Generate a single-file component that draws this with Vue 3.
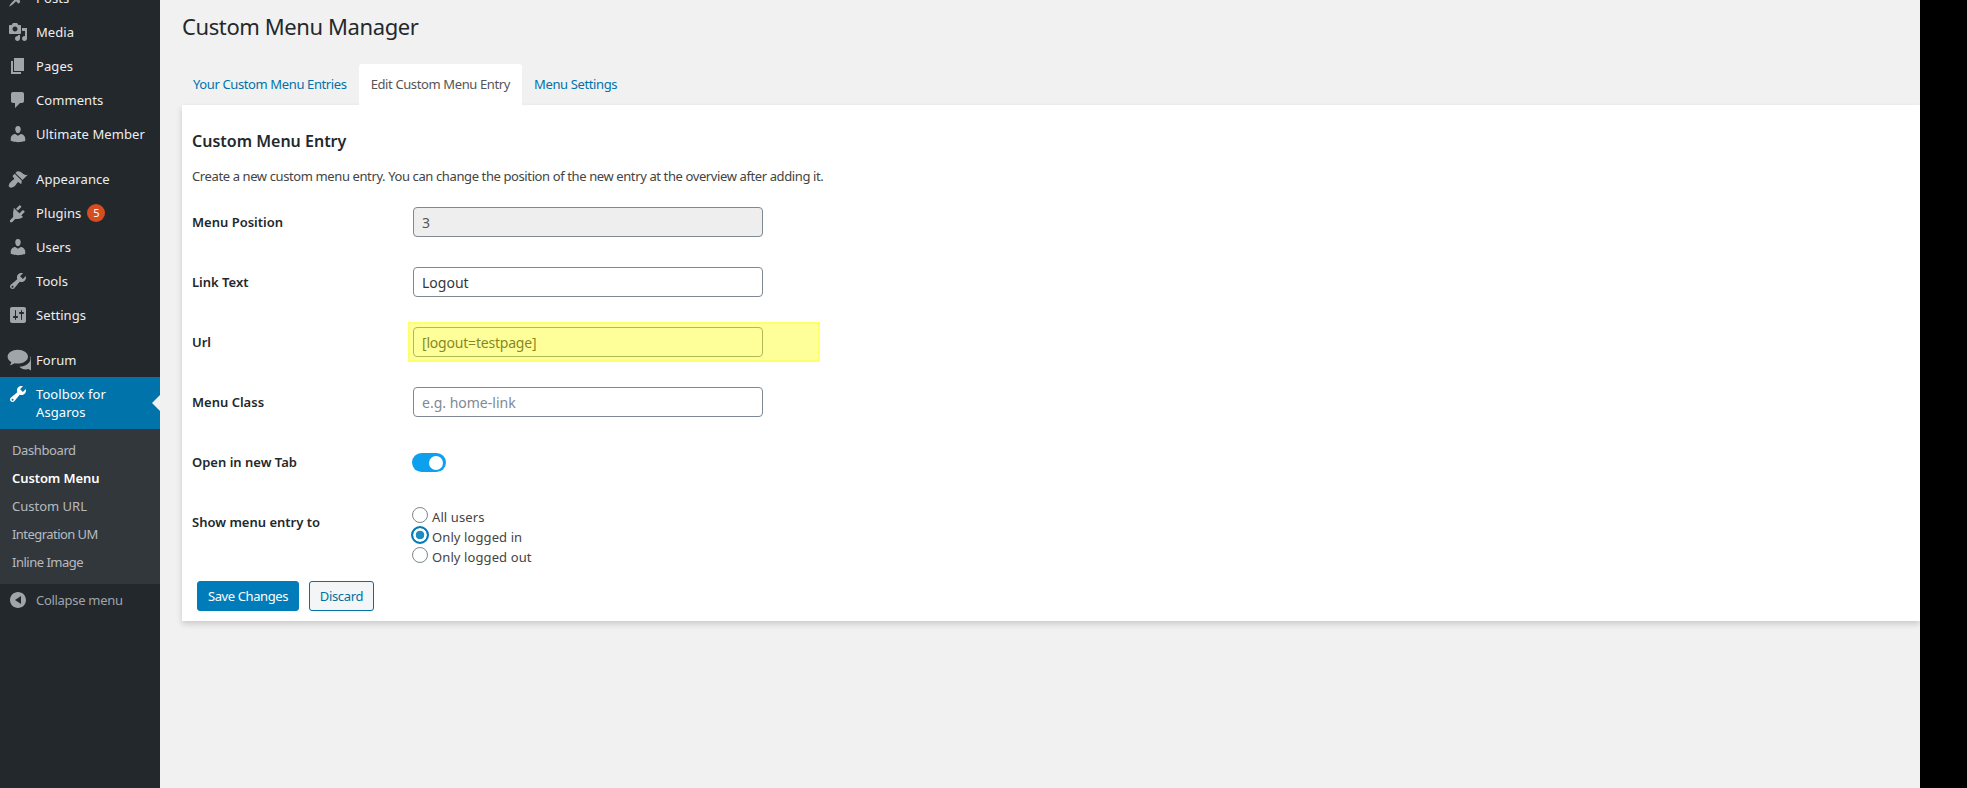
<script setup>
const icons = {
  posts: 'M10.44 3.02l1.82-1.82 6.36 6.35-1.83 1.82c-1.05-.68-2.48-.57-3.41.36l-.75.75c-.92.93-1.04 2.35-.35 3.41l-1.83 1.82-2.41-2.41-2.8 2.79c-.42.42-3.38 2.71-3.8 2.29s1.86-3.39 2.28-3.81l2.79-2.79L4.1 9.36l1.83-1.82c1.05.69 2.48.57 3.4-.36l.75-.75c.93-.92 1.05-2.35.36-3.41z',
  media: 'M13 11V4c0-.55-.45-1-1-1h-1.67L9 1H5L3.67 3H2c-.55 0-1 .45-1 1v7c0 .55.45 1 1 1h10c.55 0 1-.45 1-1zM7 4.5c1.38 0 2.5 1.12 2.5 2.5S8.38 9.5 7 9.5 4.5 8.38 4.5 7 5.62 4.5 7 4.5zM14 6h5v10.5c0 1.38-1.12 2.5-2.5 2.5S14 17.88 14 16.5s1.12-2.5 2.5-2.5c.17 0 .34.02.5.05V9h-3V6zm-4 8.05V13h2v3.5c0 1.38-1.12 2.5-2.5 2.5S7 17.88 7 16.5 8.12 14 9.5 14c.17 0 .34.02.5.05z',
  pages: 'M6 15V2h10v13H6zm-1 1h8v2H3V5h2v11z',
  comments: 'M5 2h9c1.1 0 2 .9 2 2v7c0 1.1-.9 2-2 2h-2l-5 5v-5H5c-1.1 0-2-.9-2-2V4c0-1.1.9-2 2-2z',
  user: 'M10 9.25c-2.27 0-2.73-3.44-2.73-3.44C7 4.02 7.82 2 9.97 2c2.16 0 2.98 2.02 2.71 3.81 0 0-.41 3.44-2.68 3.44zm0 2.57L12.72 10c2.39 0 4.52 2.33 4.52 4.53v2.49s-3.65 1.13-7.24 1.13c-3.65 0-7.24-1.13-7.24-1.13v-2.49c0-2.25 1.94-4.48 4.47-4.48z',
  appearance: 'M14.48 11.06L7.41 3.99l1.5-1.5c.5-.56 2.3-.47 3.51.32 1.21.8 1.43 1.28 2.91 2.1 1.18.64 2.45 1.26 4.45.85zm-.71.71L6.7 4.7 4.93 6.47c-.39.39-.39 1.02 0 1.41l1.06 1.06c.39.39.39 1.03 0 1.42-.6.6-1.43 1.11-2.21 1.69-.35.26-.7.53-1.01.84C1.43 13.73 0 16.66 1.39 18.06c1.4 1.39 4.31-.05 5.65-1.39.31-.31.58-.66.84-1.01.59-.77 1.09-1.61 1.7-2.21.39-.39 1.02-.39 1.41 0l1.06 1.06c.39.39 1.02.39 1.41 0z',
  plugins: 'M13.11 4.36L9.87 7.6 8 5.73l3.24-3.24c.35-.34 1.05-.2 1.56.32.52.51.66 1.21.31 1.55zm-8 1.77l.91-1.12 9.01 9.01-1.19.84c-.71.71-2.58 1.18-3.82 1.18H7.21l-3.15 3.15H1.99v-2.06l3.16-3.17V9.93c0-1.24.35-3.11 1.05-3.81zM16.4 9.2l-3.24 3.24-1.87-1.87 3.24-3.24c.34-.35 1.04-.21 1.55.31.52.51.67 1.21.32 1.56z',
  tools: 'M16.68 9.77c-1.34 1.34-3.3 1.67-4.95.99l-5.41 6.52c-.99.99-2.59.99-3.57 0-.99-.98-.99-2.58 0-3.57l6.52-5.42c-.68-1.65-.35-3.61.99-4.95 1.28-1.28 3.12-1.62 4.72-1.06l-2.89 2.89 2.82 2.82 2.86-2.87c.53 1.58.18 3.4-1.09 4.67zM3.81 16.56c.4.4 1.04.4 1.44 0 .4-.4.4-1.04 0-1.44-.4-.4-1.04-.4-1.44 0-.4.4-.4 1.04 0 1.44z',
  settings: 'M18 16V4c0-1.1-.9-2-2-2H4c-1.1 0-2 .9-2 2v12c0 1.1.9 2 2 2h12c1.1 0 2-.9 2-2zM8 11h1c.55 0 1 .45 1 1s-.45 1-1 1H8v1.5c0 .28-.22.5-.5.5s-.5-.22-.5-.5V13H6c-.55 0-1-.45-1-1s.45-1 1-1h1V5.5c0-.28.22-.5.5-.5s.5.22.5.5V11zm5-2h-1c-.55 0-1-.45-1-1s.45-1 1-1h1V5.5c0-.28.22-.5.5-.5s.5.22.5.5V7h1c.55 0 1 .45 1 1s-.45 1-1 1h-1v5.5c0 .28-.22.5-.5.5s-.5-.22-.5-.5V9z',
  forum: 'M9 1.5C4.3 1.5.5 4.1.5 7.3c0 1.8 1.2 3.4 3.1 4.5-.2 1-.8 1.9-1.5 2.5 1.6-.1 3-.7 4.1-1.6.9.2 1.8.3 2.8.3 4.7 0 8.5-2.6 8.5-5.7S13.7 1.5 9 1.5zM19.2 7c.3.6.4 1.2.4 1.8 0 3.8-4.2 6.7-9.3 6.9 1.1 1.3 3.1 2.2 5.4 2.2.8 0 1.5-.1 2.2-.3 1 .8 2.1 1.3 3.5 1.4-.6-.6-1.1-1.3-1.3-2.2 1.6-1 2.6-2.4 2.6-4 0-2.5-1.1-4.6-3.5-5.8z',
  collapse: 'M18 10c0-4.42-3.58-8-8-8s-8 3.58-8 8 3.58 8 8 8 8-3.58 8-8zm-5-4v8l-6-4z'
}

const menuGroups = [
  [
    { label: 'Posts', icon: 'posts' },
    { label: 'Media', icon: 'media' },
    { label: 'Pages', icon: 'pages' },
    { label: 'Comments', icon: 'comments' },
    { label: 'Ultimate Member', icon: 'user' }
  ],
  [
    { label: 'Appearance', icon: 'appearance' },
    { label: 'Plugins', icon: 'plugins', badge: '5' },
    { label: 'Users', icon: 'user' },
    { label: 'Tools', icon: 'tools' },
    { label: 'Settings', icon: 'settings' }
  ],
  [{ label: 'Forum', icon: 'forum' }]
]

const submenu = [
  { label: 'Dashboard', tracking: -0.4 },
  { label: 'Custom Menu', current: true, tracking: -0.1 },
  { label: 'Custom URL', tracking: 0 },
  { label: 'Integration UM', tracking: -0.55 },
  { label: 'Inline Image', tracking: -0.5 }
]

const tabs = [
  { label: 'Your Custom Menu Entries' },
  { label: 'Edit Custom Menu Entry', active: true },
  { label: 'Menu Settings' }
]

const radios = [
  { label: 'All users', checked: false },
  { label: 'Only logged in', checked: true },
  { label: 'Only logged out', checked: false }
]
</script>

<template>
  <div class="page">
    <aside class="sidebar">
      <div class="menu">
        <div v-for="(group, g) in menuGroups" :key="g" class="group">
          <a v-for="item in group" :key="item.label" class="item">
            <svg class="icon" :class="'icon-' + item.icon" viewBox="0 0 20 20"><path :d="icons[item.icon]" /></svg>
            <span>{{ item.label }}</span>
            <span v-if="item.badge" class="badge">{{ item.badge }}</span>
          </a>
        </div>
        <a class="item active">
          <svg class="icon" viewBox="0 0 20 20"><path :d="icons.tools" /></svg>
          <span>Toolbox for Asgaros</span>
          <i class="arrow"></i>
        </a>
        <ul class="submenu">
          <li v-for="s in submenu" :key="s.label" :class="{ current: s.current }" :style="{ letterSpacing: s.tracking + 'px' }">{{ s.label }}</li>
        </ul>
        <a class="item collapse">
          <svg class="icon" viewBox="0 0 20 20"><path :d="icons.collapse" /></svg>
          <span>Collapse menu</span>
        </a>
      </div>
    </aside>

    <main class="main">
      <h1 class="title">Custom Menu Manager</h1>
      <nav class="tabs">
        <a v-for="t in tabs" :key="t.label" class="tab" :class="{ active: t.active }">{{ t.label }}</a>
      </nav>
      <section class="panel">
        <h2 class="heading">Custom Menu Entry</h2>
        <p class="desc">Create a new custom menu entry. You can change the position of the new entry at the overview after adding it.</p>

        <div class="row">
          <label class="label">Menu Position</label>
          <div class="control"><input class="input" type="text" value="3" disabled /></div>
        </div>
        <div class="row">
          <label class="label">Link Text</label>
          <div class="control"><input class="input" type="text" value="Logout" /></div>
        </div>
        <div class="row">
          <label class="label">Url</label>
          <div class="control">
            <div class="marked">
              <input class="input tight" type="text" value="[logout=testpage]" />
              <div class="highlight"></div>
            </div>
          </div>
        </div>
        <div class="row">
          <label class="label">Menu Class</label>
          <div class="control"><input class="input" type="text" placeholder="e.g. home-link" /></div>
        </div>
        <div class="row">
          <label class="label">Open in new Tab</label>
          <div class="control toggle-wrap"><span class="toggle"><i class="thumb"></i></span></div>
        </div>
        <div class="row">
          <label class="label">Show menu entry to</label>
          <div class="control radios">
            <label v-for="r in radios" :key="r.label" class="radio">
              <input type="radio" name="show" :checked="r.checked" />
              <span>{{ r.label }}</span>
            </label>
          </div>
        </div>
        <div class="actions">
          <button class="btn primary" type="button">Save Changes</button>
          <button class="btn secondary" type="button">Discard</button>
        </div>
      </section>
    </main>

    <div class="edge"></div>
  </div>
</template>

<style>
html, body { margin: 0; background: #f1f1f1; }
</style>

<style scoped>
.page {
  display: grid;
  grid-template-columns: 160px 1fr 47px;
  height: 788px;
  overflow: hidden;
  font-family: "Noto Sans", sans-serif;
  font-size: 13px;
  color: #444;
  background: #f1f1f1;
}
.sidebar { background: #23282d; overflow: hidden; }
.menu { margin-top: -19px; }
.group { margin-bottom: 11px; }
.group:last-of-type { margin-bottom: 0; }
.item {
  display: flex;
  align-items: center;
  min-height: 34px;
  padding-left: 36px;
  position: relative;
  line-height: 18px;
  letter-spacing: 0.08px;
  color: #eee;
}
.icon {
  position: absolute;
  left: 8px;
  top: 7px;
  width: 20px;
  height: 20px;
  fill: #a0a5aa;
}
.icon-forum { left: 7px; width: 24px; top: 5px; height: 24px; }
.badge {
  display: inline-block;
  width: 18px;
  height: 18px;
  margin-left: 6px;
  border-radius: 50%;
  background: #d54e21;
  color: #fff;
  font-size: 11px;
  line-height: 18px;
  text-align: center;
}
.item.active {
  min-height: 52px;
  background: #0073aa;
  color: #fff;
  line-height: 18px;
  padding-right: 30px;
}
.item.active .icon { fill: #fff; top: 7px; }
.arrow {
  position: absolute;
  right: 0;
  top: 18px;
  border: 8px solid transparent;
  border-right-color: #f1f1f1;
  border-left: 0;
}
.submenu {
  list-style: none;
  margin: 0;
  padding: 7px 0 8px;
  background: #32373c;
}
.submenu li {
  height: 28px;
  line-height: 28px;
  padding-left: 12px;
  color: rgba(240, 245, 250, 0.7);
}
.submenu li.current { color: #fff; font-weight: 600; }
.item.collapse { color: #a0a5aa; height: 32px; min-height: 32px; letter-spacing: -0.3px; }
.item.collapse .icon { top: 6px; }

.main { padding-top: 12px; min-width: 0; }
.title {
  margin: 0 0 23px 22px;
  font-size: 22px;
  font-weight: 400;
  line-height: 29px;
  letter-spacing: -0.4px;
  color: #23282d;
}
.tabs { display: flex; margin-left: 21px; height: 41px; }
.tab {
  padding: 0 12px;
  line-height: 41px;
  letter-spacing: -0.38px;
  color: #0073aa;
  border-radius: 3px 3px 0 0;
}
.tab.active { background: #fff; color: #555; }
.panel {
  margin-left: 22px;
  height: 516px;
  box-sizing: border-box;
  padding: 0 10px 10px;
  background: #fff;
  box-shadow: 0 3px 6px rgba(0, 0, 0, 0.16);
}
.heading {
  margin: 0;
  padding-top: 25px;
  font-size: 16px;
  font-weight: 600;
  line-height: 22px;
  color: #23282d;
}
.desc {
  margin: 0;
  padding-top: 14px;
  line-height: 20px;
  height: 26px;
  letter-spacing: -0.39px;
}
.row { display: flex; align-items: flex-start; }
.label {
  width: 221px;
  flex: none;
  line-height: 60px;
  font-weight: 600;
  color: #23282d;
}
.control { padding: 15px 0; }
.input {
  display: block;
  box-sizing: border-box;
  width: 350px;
  height: 30px;
  padding: 0 8px;
  border: 1px solid #7e8993;
  border-radius: 4px;
  background: #fff;
  color: #32373c;
  font: 14px/28px "Noto Sans", sans-serif;
  outline: none;
}
.input.tight { letter-spacing: -0.2px; }
.input::placeholder { color: #7e8993; opacity: 1; }
.input:disabled { background: #eee; color: #555; opacity: 1; }
.marked { position: relative; }
.highlight {
  position: absolute;
  left: -5px;
  top: -5px;
  right: -57px;
  bottom: -5px;
  box-sizing: border-box;
  background: rgba(255, 255, 0, 0.4);
  border: 2px solid rgba(255, 255, 0, 0.3);
}
.toggle-wrap { padding: 21px 0 0; margin-left: -1px; height: 39px; }
.toggle {
  display: block;
  position: relative;
  width: 34px;
  height: 19px;
  border-radius: 10px;
  background: #0ca0ee;
}
.thumb {
  position: absolute;
  right: 3px;
  top: 2.5px;
  width: 14px;
  height: 14px;
  border-radius: 50%;
  background: #fff;
}
.radios { padding: 15px 0 0; margin-left: -1px; height: 59px; display: flex; flex-direction: column; }
.radio { display: flex; align-items: center; height: 20px; font-size: 13px; line-height: 20px; letter-spacing: 0.1px; }
.radio input {
  appearance: none;
  box-sizing: border-box;
  flex: none;
  width: 16px;
  height: 16px;
  margin: 0 4px 0 0;
  border: 1px solid #7e8993;
  border-radius: 50%;
  background: #fff;
  position: relative;
  top: -2px;
}
.radio input:checked {
  border-color: #007cba;
  outline: 2px solid #007cba;
  outline-offset: -1px;
  background: radial-gradient(circle, #1e8cbe 0 4px, #fff 4.6px);
}
.actions { display: flex; gap: 10px; margin-top: 15px; padding-left: 5px; }
.btn {
  box-sizing: border-box;
  height: 30px;
  padding: 0;
  border: 1px solid #007cba;
  border-radius: 3px;
  font: 13px/28px "Noto Sans", sans-serif;
  text-align: center;
}
.btn.primary { width: 102px; background: #007cba; color: #fff; letter-spacing: -0.4px; }
.btn.secondary { width: 65px; background: #f3f5f6; color: #0071a1; border-color: #0071a1; letter-spacing: -0.3px; }
.edge { background: #000; }
</style>
